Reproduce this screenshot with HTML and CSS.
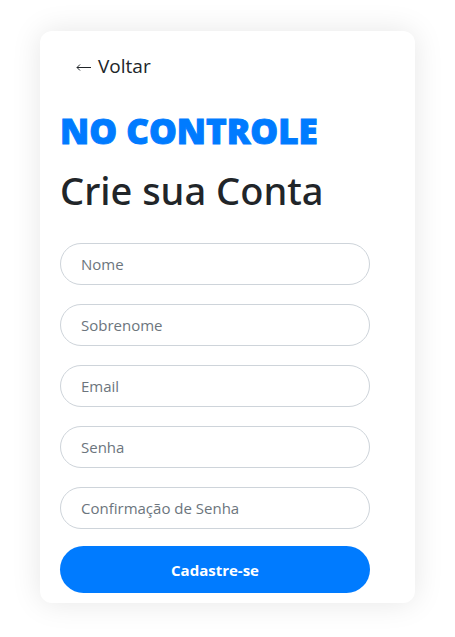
FILE: index.html
```html
<!DOCTYPE html>
<html lang="pt-BR">
<head>
<meta charset="utf-8">
<meta name="viewport" content="width=device-width, initial-scale=1">
<title>No Controle</title>
<link rel="stylesheet" href="styles.css">
</head>
<body>
<main class="card">
  <a class="back" href="#"><svg class="arrow" viewBox="0 0 16 12" aria-hidden="true"><path d="M1 7.500H15M4 4.500L1 7.500L4 10.500"/></svg>Voltar</a>
  <h1 class="brand">NO CONTROLE</h1>
  <h2 class="title">Crie sua Conta</h2>
  <form class="form">
    <div class="fields">
      <input class="field" type="text" placeholder="Nome" aria-label="Nome">
      <input class="field" type="text" placeholder="Sobrenome" aria-label="Sobrenome">
      <input class="field" type="email" placeholder="Email" aria-label="Email">
      <input class="field" type="password" placeholder="Senha" aria-label="Senha">
      <input class="field" type="password" placeholder="Confirmação de Senha" aria-label="Confirmação de Senha">
    </div>
    <button class="submit" type="submit">Cadastre-se</button>
  </form>
</main>
</body>
</html>
```
FILE: styles.css
```css
* { box-sizing: border-box; }
body {
  margin: 0;
  padding: 31px 40px 34px;
  background: #fff;
  color: #212529;
  font-family: "Open Sans", "Noto Sans", sans-serif;
}
.card {
  padding: 20px 45px 10px 20px;
  border-radius: 12px;
  background: #fff;
  box-shadow: 0 0 30px rgba(0, 0, 0, 0.1);
}
.back {
  display: flex;
  align-items: center;
  gap: 6px;
  padding-left: 16px;
  color: #212529;
  font-size: 19px;
  line-height: 30px;
  text-decoration: none;
}
.arrow {
  width: 16px;
  height: 12px;
  fill: none;
  stroke: currentColor;
  stroke-width: 1;
}
.brand {
  margin: 30px 0 0;
  color: #007bff;
  font-size: 35px;
  font-weight: 800;
  line-height: 40px;
  white-space: nowrap;
  -webkit-text-stroke: 1px #007bff;
}
.title {
  margin: 14px 0 28px;
  font-family: "Noto Sans", "Open Sans", sans-serif;
  font-size: 38px;
  font-weight: 500;
  line-height: 50px;
  white-space: nowrap;
}
.form {
  display: grid;
  gap: 17px;
}
.fields {
  display: grid;
  gap: 19px;
}
.field {
  width: 100%;
  height: 42px;
  padding: 0 20px;
  border: 1px solid #ced4da;
  border-radius: 21px;
  background: #fff;
  color: #495057;
  font-family: inherit;
  font-size: 15px;
}
.field::placeholder { color: #6c757d; opacity: 1; }
.submit {
  height: 47px;
  border: 0;
  border-radius: 24px;
  background: #007bff;
  color: #fff;
  font-family: inherit;
  font-size: 15px;
  font-weight: 700;
}
```
